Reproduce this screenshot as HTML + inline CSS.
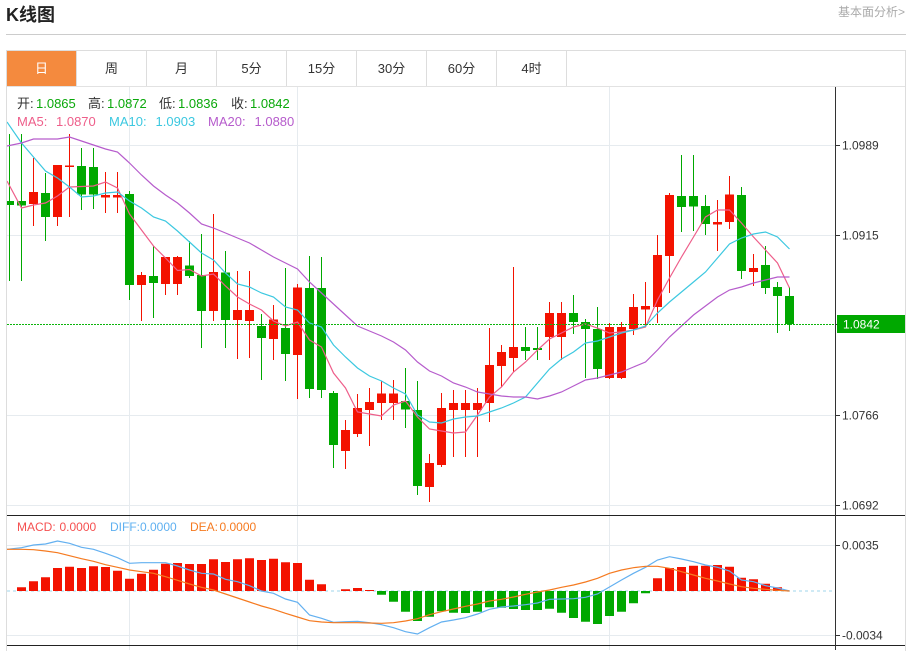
<!DOCTYPE html>
<html lang="zh">
<head>
<meta charset="utf-8">
<title>K线图</title>
<style>
html,body{margin:0;padding:0;background:#fff;width:911px;height:650px;overflow:hidden;font-family:"Liberation Sans","Noto Sans CJK SC",sans-serif}
.t{position:absolute;left:6px;top:3px;font-size:18px;font-weight:bold;line-height:24px;color:#222}
.m{position:absolute;right:6px;top:4px;font-size:12px;line-height:16px;color:#aaa}
.h{position:absolute;left:6px;top:34px;width:900px;height:1px;background:#ccc}
.box{position:absolute;left:6px;top:50px;width:898px;height:600px;border:1px solid #ddd;border-bottom:0}
.tabs{position:absolute;left:7px;top:51px;height:35px;display:flex}
.tabs div{width:69px;height:35px;border-right:1px solid #ddd;text-align:center;font-size:13px;line-height:36px;color:#333}
.tabs div.a{background:#f48a3e;color:#fff}
svg{position:absolute;left:0;top:0}
text{font-family:"Liberation Sans","Noto Sans CJK SC",sans-serif}
</style>
</head>
<body>
<div class="t">K线图</div>
<div class="m">基本面分析&gt;</div>
<div class="h"></div>
<div class="box"></div>
<div class="tabs"><div class="a">日</div><div>周</div><div>月</div><div>5分</div><div>15分</div><div>30分</div><div>60分</div><div>4时</div></div>
<svg width="911" height="650" viewBox="0 0 911 650">
<defs><clipPath id="c"><rect x="7" y="87" width="828" height="563"/></clipPath></defs>
<rect x="7" y="86" width="898" height="1" fill="#e2e2e2"/>
<path d="M7 145.5H835M7 235.5H835M7 415.5H835M7 505.5H835M7 545.5H835M7 635.5H835M129.5 87V650M297.5 87V650M609.5 87V650" stroke="#e6ebef" fill="none"/>
<g clip-path="url(#c)">
<path d="M33.5 158V226M57.5 165V226M69.5 134V217M105.5 172V213M117.5 172V213M141.5 272V321M165.5 257V295M177.5 256V295M213.5 214V321M237.5 271V359M249.5 271V358M273.5 305V360M297.5 284V399M345.5 420V469M357.5 394V437M369.5 388V446M381.5 381V420M393.5 380V420M429.5 454V502M441.5 393V467M453.5 390V457M465.5 390V457M477.5 388V457M489.5 328V422M501.5 345V387M513.5 267V372M549.5 302V360M561.5 302V360M609.5 323V379M621.5 322V379M633.5 294V335M645.5 282V326M657.5 235V323M669.5 193V293M717.5 200V251M729.5 176V229M753.5 254V286" stroke="#f31200" fill="none"/>
<path d="M9.5 134V281M21.5 134V281M45.5 173V241M81.5 148V210M93.5 148V209M129.5 191V300M153.5 246V318M189.5 241V278M201.5 234V348M225.5 251V348M261.5 314V380M285.5 268V381M309.5 256V398M321.5 257V398M333.5 391V468M405.5 368V428M417.5 381V495M525.5 327V360M537.5 327V360M573.5 295V334M585.5 319V378M597.5 307V379M681.5 155V232M693.5 155V231M705.5 195V235M741.5 187V279M765.5 246V294M777.5 282V333M789.5 287V331" stroke="#00a800" fill="none"/>
<path d="M29 192h9V204h-9zM53 165h9V217h-9zM65 165.5h9V167h-9zM101 195h9V197.5h-9zM113 195h9V197.5h-9zM137 275h9V285h-9zM161 257h9V284h-9zM173 257h9V284h-9zM209 272h9V311h-9zM233 310h9V320h-9zM245 310h9V321h-9zM269 319.5h9V339h-9zM293 287.5h9V355h-9zM341 430h9V451h-9zM353 408h9V434h-9zM365 402h9V410h-9zM377 393.5h9V403h-9zM389 393.5h9V403h-9zM425 463h9V487h-9zM437 408h9V465h-9zM449 403h9V410h-9zM461 403h9V410h-9zM473 403h9V410h-9zM485 365h9V403h-9zM497 352h9V366h-9zM509 347h9V358h-9zM545 313h9V337h-9zM557 313h9V337h-9zM605 327h9V378h-9zM617 327h9V378h-9zM629 307h9V329h-9zM641 306h9V309.5h-9zM653 255h9V307h-9zM665 195h9V256h-9zM713 222h9V224.5h-9zM725 194.5h9V222h-9zM749 268h9V272h-9z" fill="#f31200"/>
<path d="M5 201h9V205h-9zM17 201h9V205.5h-9zM41 193h9V217h-9zM77 166h9V194.5h-9zM89 167h9V194.5h-9zM125 194h9V285h-9zM149 276h9V283h-9zM185 265.5h9V276h-9zM197 275h9V311h-9zM221 272.5h9V320h-9zM257 326h9V338h-9zM281 328h9V354h-9zM305 288h9V389h-9zM317 288h9V390h-9zM329 393h9V445h-9zM401 401h9V409.5h-9zM413 410h9V486h-9zM521 347h9V351h-9zM533 348h9V350h-9zM569 313h9V322h-9zM581 322h9V329h-9zM593 329h9V369h-9zM677 196h9V207h-9zM689 196h9V206.5h-9zM701 206h9V224h-9zM737 195h9V271h-9zM761 265h9V288h-9zM773 287h9V296h-9zM785 296h9V324h-9z" fill="#00a800"/>
<path d="M7 181L21.5 208L33.5 205L45.5 203L57.5 196L69.5 187L81.5 186.5L93.5 186L105.5 182L117.5 188L129.5 214L141.5 230L153.5 246L165.5 258L177.5 270.5L189.5 269.5L201.5 276L213.5 274L225.5 286L237.5 297L249.5 304L261.5 310L273.5 321L285.5 326L297.5 322L309.5 340L321.5 347L333.5 373L345.5 388L357.5 412L369.5 414L381.5 416L393.5 405L405.5 401L417.5 417L429.5 429L441.5 431L453.5 433L465.5 432L477.5 415L489.5 397L501.5 387L513.5 372L525.5 362L537.5 350L549.5 339L561.5 333L573.5 327L585.5 324L597.5 328L609.5 333L621.5 332L633.5 330L645.5 327L657.5 300L669.5 278L681.5 257L693.5 237L705.5 217L717.5 210L729.5 210L741.5 223L753.5 237L765.5 250L777.5 263L789.5 288" fill="none" stroke="#ee5e8a" stroke-width="1.2"/>
<path d="M7 122L21.5 143L33.5 157L45.5 171L57.5 178L69.5 187L81.5 197L93.5 196L105.5 193L117.5 192L129.5 201L141.5 208L153.5 217L165.5 221L177.5 231L189.5 242L201.5 253L213.5 260L225.5 273L237.5 284L249.5 287L261.5 293L273.5 297L285.5 307L297.5 310L309.5 323L321.5 327L333.5 345L345.5 357L357.5 368L369.5 376L381.5 381L393.5 388L405.5 394L417.5 415L429.5 422L441.5 423L453.5 419L465.5 417L477.5 416L489.5 412L501.5 408L513.5 403L525.5 397L537.5 383L549.5 369L561.5 359L573.5 352L585.5 343L597.5 341L609.5 337L621.5 333L633.5 330L645.5 326L657.5 313L669.5 302L681.5 292L693.5 282L705.5 272L717.5 258L729.5 244L741.5 238L753.5 234L765.5 232L777.5 237L789.5 249" fill="none" stroke="#3cc8e0" stroke-width="1.2"/>
<path d="M7 146L21.5 143L33.5 139L45.5 139L57.5 139L69.5 137L81.5 141L93.5 145L105.5 149L117.5 152L129.5 163L141.5 175L153.5 186L165.5 195L177.5 203L189.5 213L201.5 224L213.5 228L225.5 233L237.5 238L249.5 243L261.5 250L273.5 257L285.5 263L297.5 269L309.5 282L321.5 293L333.5 304L345.5 315L357.5 326L369.5 331L381.5 336L393.5 342L405.5 350L417.5 362L429.5 371L441.5 376L453.5 383L465.5 387L477.5 392L489.5 394L501.5 396L513.5 397L525.5 397L537.5 399L549.5 396L561.5 392L573.5 386L585.5 380L597.5 378L609.5 375L621.5 372L633.5 367L645.5 362L657.5 350L669.5 337L681.5 326L693.5 315L705.5 306L717.5 297L729.5 290L741.5 287L753.5 283L765.5 280L777.5 277L789.5 277" fill="none" stroke="#b65ccc" stroke-width="1.2"/>
<path d="M7 591H832" stroke="#bfe4f2" stroke-width="1.5" stroke-dasharray="3 3" fill="none"/>
<path d="M17 587.3h9V591h-9zM29 581.3h9V591h-9zM41 577.3h9V591h-9zM53 568h9V591h-9zM65 566.7h9V591h-9zM77 568h9V591h-9zM89 566.3h9V591h-9zM101 567h9V591h-9zM113 570.7h9V591h-9zM125 578.7h9V591h-9zM137 573.7h9V591h-9zM149 569.7h9V591h-9zM161 563.7h9V591h-9zM173 563h9V591h-9zM185 564h9V591h-9zM197 564h9V591h-9zM209 559.3h9V591h-9zM221 562h9V591h-9zM233 559.3h9V591h-9zM245 558.3h9V591h-9zM257 560h9V591h-9zM269 558.7h9V591h-9zM281 562.3h9V591h-9zM293 563h9V591h-9zM305 579.7h9V591h-9zM317 584.3h9V591h-9zM341 589.3h9V591h-9zM353 588h9V591h-9zM365 590h9V591h-9zM653 578.3h9V591h-9zM665 568h9V591h-9zM677 567h9V591h-9zM689 565.7h9V591h-9zM701 565.7h9V591h-9zM713 565h9V591h-9zM725 566.7h9V591h-9zM737 577.7h9V591h-9zM749 579.3h9V591h-9zM761 583.7h9V591h-9zM773 587.3h9V591h-9z" fill="#f31200"/>
<path d="M377 591h9V594.7h-9zM389 591h9V601.7h-9zM401 591h9V611.7h-9zM413 591h9V621h-9zM425 591h9V616.7h-9zM437 591h9V611.3h-9zM449 591h9V612.7h-9zM461 591h9V613h-9zM473 591h9V611.7h-9zM485 591h9V607.3h-9zM497 591h9V607.7h-9zM509 591h9V609h-9zM521 591h9V610h-9zM533 591h9V610h-9zM545 591h9V608.7h-9zM557 591h9V612.7h-9zM569 591h9V618h-9zM581 591h9V621.7h-9zM593 591h9V624h-9zM605 591h9V616h-9zM617 591h9V611.7h-9zM629 591h9V603.3h-9zM641 591h9V593.3h-9z" fill="#00a800"/>
<path d="M7 549.3L21.5 547.7L33.5 545L45.5 544L57.5 541L69.5 543.3L81.5 547.3L93.5 549.3L105.5 553.3L117.5 557.7L129.5 563.3L141.5 562.7L153.5 562.7L165.5 562.7L177.5 566L189.5 570L201.5 573.3L213.5 574L225.5 579.3L237.5 581.7L249.5 585.7L261.5 591L273.5 593.3L285.5 599L297.5 602.3L309.5 615L321.5 618.3L333.5 622.3L345.5 621.7L357.5 621.3L369.5 622.7L381.5 624.7L393.5 627.7L405.5 631.7L417.5 634L429.5 627.7L441.5 622L453.5 620L465.5 617.7L477.5 614L489.5 609.3L501.5 607L513.5 606L525.5 604.7L537.5 603L549.5 599.3L561.5 599L573.5 598.7L585.5 597.3L597.5 594L609.5 587L621.5 580L633.5 573.3L645.5 567.3L657.5 560L669.5 556.7L681.5 559L693.5 561.7L705.5 565L717.5 567.3L729.5 571L741.5 580L753.5 581.7L765.5 585.7L777.5 588L789.5 591" fill="none" stroke="#63b0f0" stroke-width="1.2"/>
<path d="M7 549.3L21.5 549.3L33.5 549.7L45.5 551L57.5 552.7L69.5 555.7L81.5 558.7L93.5 561.3L105.5 564.7L117.5 567.3L129.5 570L141.5 571.7L153.5 573.3L165.5 576.7L177.5 580.3L189.5 584L201.5 587.3L213.5 590L225.5 594L237.5 598L249.5 602L261.5 606L273.5 609.3L285.5 613.3L297.5 617L309.5 620.7L321.5 622L333.5 622.7L345.5 622.7L357.5 622.7L369.5 623L381.5 623.3L393.5 622.7L405.5 621L417.5 618.7L429.5 614.7L441.5 611.7L453.5 609L465.5 606.3L477.5 604L489.5 601L501.5 599.3L513.5 597L525.5 594.3L537.5 592L549.5 590L561.5 587.3L573.5 585L585.5 582L597.5 578.3L609.5 573.3L621.5 570L633.5 567.7L645.5 566.3L657.5 566.3L669.5 568.3L681.5 571.7L693.5 575L705.5 578.3L717.5 581L729.5 584L741.5 586.7L753.5 588.3L765.5 589.3L777.5 590.3L789.5 591" fill="none" stroke="#f57a20" stroke-width="1.2"/>
<path d="M7 324.5H835" stroke="#0cb40c" stroke-width="1" stroke-dasharray="2 1" fill="none"/>
</g>
<path d="M7 515.5H905M7 645.5H905" stroke="#222" fill="none"/>
<path d="M835.5 87V650" stroke="#333" fill="none"/>
<path d="M836 145.5H840M836 235.5H840M836 415.5H840M836 505.5H840M836 545.5H840M836 635.5H840M836 324.5H840" stroke="#333" fill="none"/>
<rect x="837" y="315" width="68" height="18" fill="#00a800"/>
<g font-size="12" fill="#333">
<text x="842" y="149.5">1.0989</text>
<text x="842" y="239.5">1.0915</text>
<text x="842" y="419.5">1.0766</text>
<text x="842" y="509.5">1.0692</text>
<text x="842" y="549.5">0.0035</text>
<text x="842" y="639.5">-0.0034</text>
<text x="843" y="328.5" fill="#fff">1.0842</text>
</g>
<g font-size="13">
<text x="17" y="108" fill="#333">开:</text><text x="36" y="108" fill="#0aa80a">1.0865</text>
<text x="88" y="108" fill="#333">高:</text><text x="107" y="108" fill="#0aa80a">1.0872</text>
<text x="159" y="108" fill="#333">低:</text><text x="178" y="108" fill="#0aa80a">1.0836</text>
<text x="231" y="108" fill="#333">收:</text><text x="250" y="108" fill="#0aa80a">1.0842</text>
<text x="17" y="126" fill="#ee5e8a">MA5:</text><text x="56" y="126" fill="#ee5e8a">1.0870</text>
<text x="109" y="126" fill="#3cc8e0">MA10:</text><text x="155.5" y="126" fill="#3cc8e0">1.0903</text>
<text x="208" y="126" fill="#b65ccc">MA20:</text><text x="254.5" y="126" fill="#b65ccc">1.0880</text>
</g>
<g font-size="12">
<text x="17" y="531" fill="#f55050">MACD:</text><text x="59.5" y="531" fill="#f55050">0.0000</text>
<text x="110" y="531" fill="#5fb0f0">DIFF:</text><text x="140" y="531" fill="#5fb0f0">0.0000</text>
<text x="190" y="531" fill="#f57a20">DEA:</text><text x="219.5" y="531" fill="#f57a20">0.0000</text>
</g>
</svg>
</body>
</html>
